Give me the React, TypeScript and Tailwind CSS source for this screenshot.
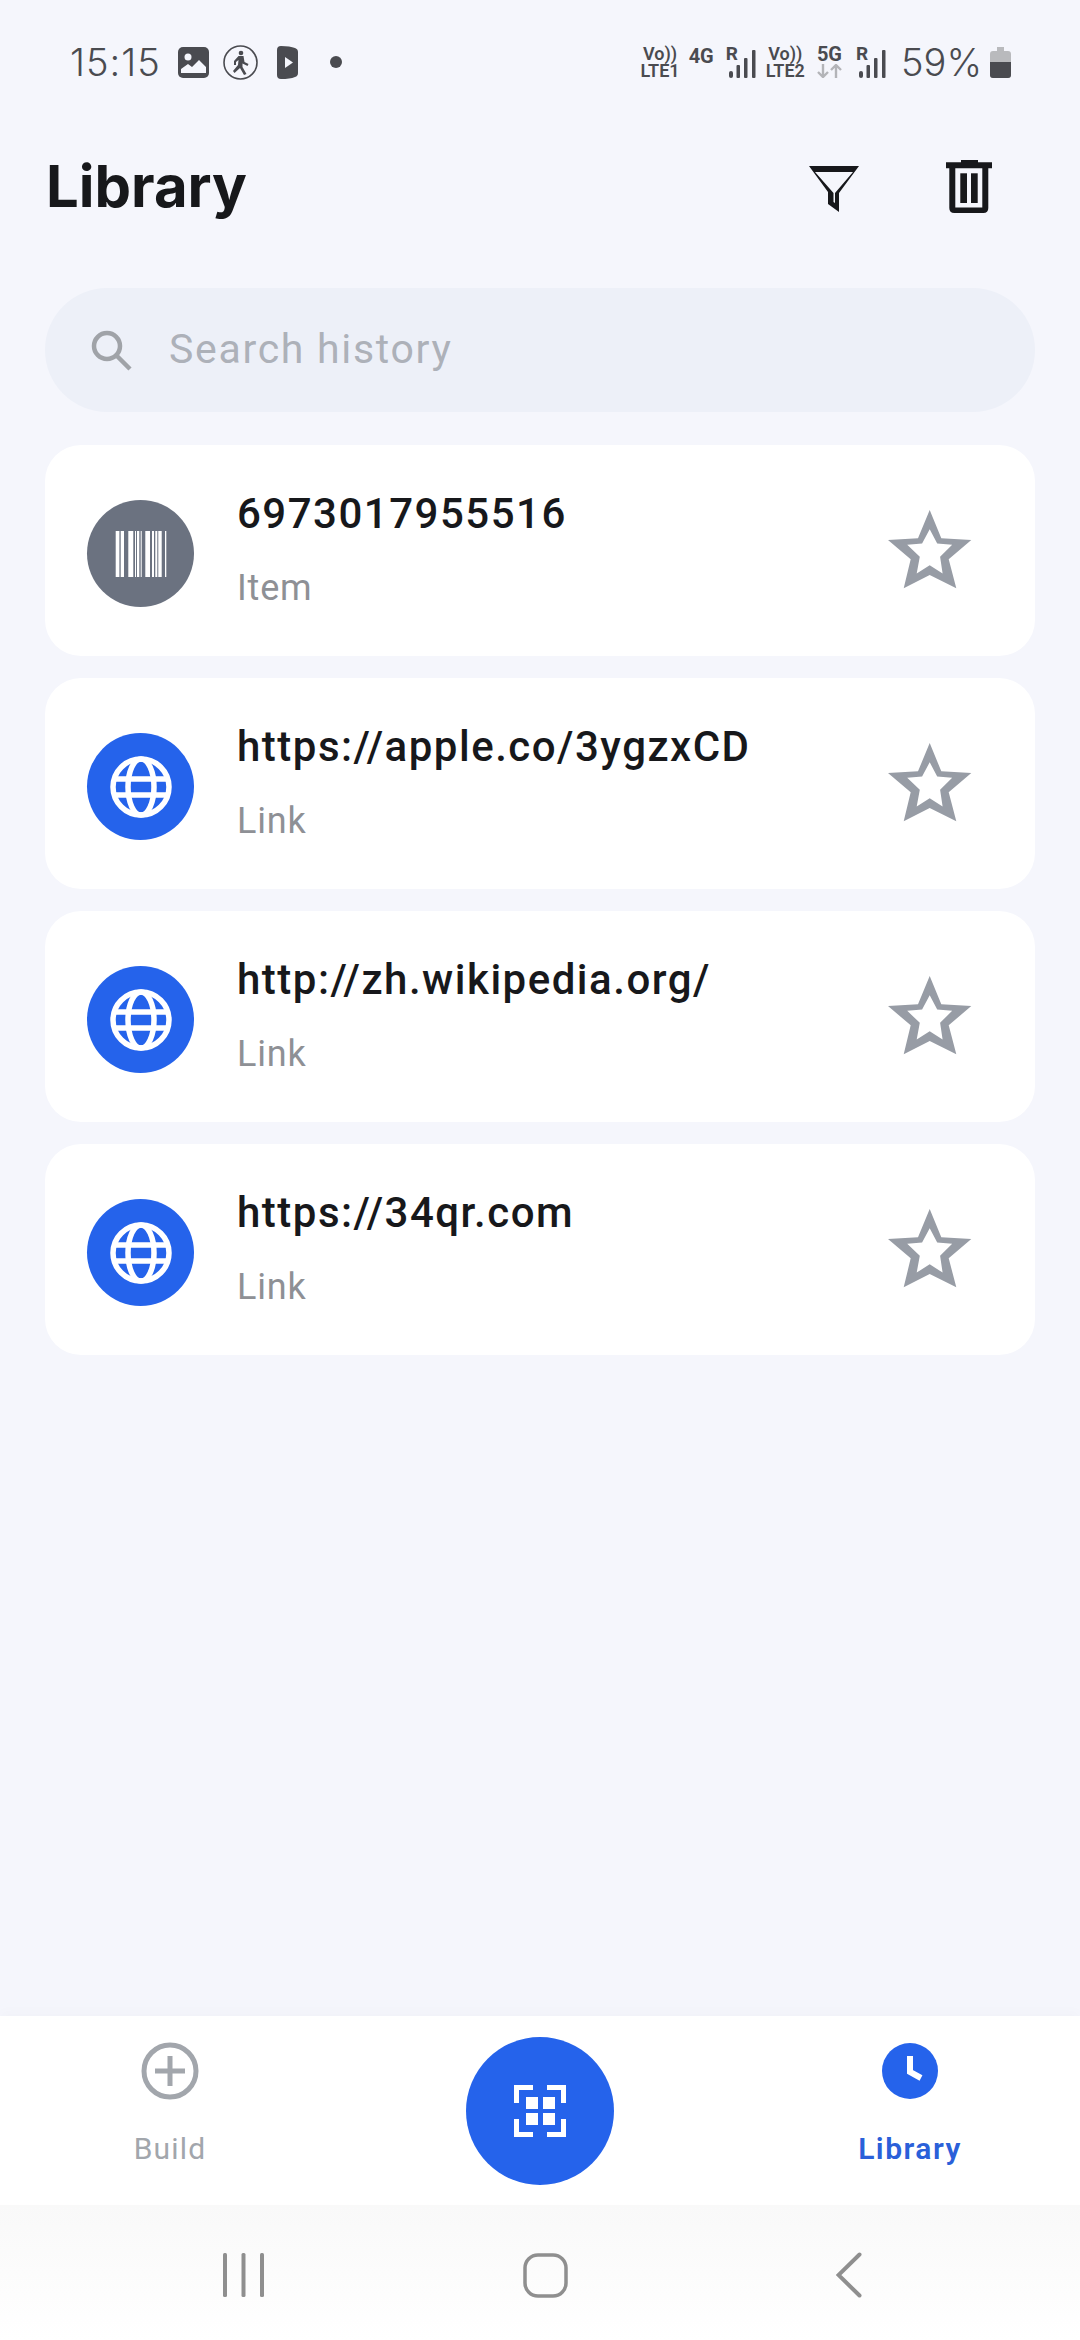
const items = [
  { title: '6973017955516', sub: 'Item', kind: 'barcode' },
  { title: 'https://apple.co/3ygzxCD', sub: 'Link', kind: 'link' },
  { title: 'http://zh.wikipedia.org/', sub: 'Link', kind: 'link' },
  { title: 'https://34qr.com', sub: 'Link', kind: 'link' },
];

function Bars() {
  return (
    <svg width="27" height="28" viewBox="0 0 27 28" fill="#4a4b50">
      <rect x="0" y="21" width="4" height="7" rx="2" />
      <rect x="7.5" y="15" width="3.5" height="13" rx="1" />
      <rect x="15" y="8" width="3.5" height="20" rx="1" />
      <rect x="23" y="0" width="3.5" height="28" rx="1" />
    </svg>
  );
}

function Signal() {
  return (
    <div className="relative h-[31px] w-[30px]">
      <span className="absolute top-[-3px] left-0 text-[19px] leading-none font-bold">R</span>
      <div className="absolute bottom-0 left-[3px]"><Bars /></div>
    </div>
  );
}

function Volte({ label }: { label: string }) {
  return (
    <div className="flex flex-col items-center text-[18px] leading-[17px] font-semibold text-[#4a4b50]">
      <span>Vo))</span>
      <span>{label}</span>
    </div>
  );
}

function StatusBar() {
  return (
    <div className="flex h-[122px] shrink-0 items-center justify-between pl-[70px] pr-[69px] pt-[2px] text-[#4a4b50]">
      <div className="flex items-center">
        <span className="w-[89px] font-['Inter',sans-serif] text-[38px] leading-none font-light tracking-[1px] whitespace-nowrap">15:15</span>
        <svg className="ml-[19px]" width="31" height="31" viewBox="0 0 31 31">
          <rect width="31" height="31" rx="5" fill="#4a4b50" />
          <circle cx="10" cy="10" r="3.5" fill="#f5f6fc" />
          <path d="M3 26 L3 22 L10 17 L14 20 L21 13 L28 20 L28 26 Z" fill="#f5f6fc" />
        </svg>
        <svg className="ml-[14px]" width="35" height="35" viewBox="0 0 35 35" fill="#4a4b50">
          <circle cx="17.5" cy="17.5" r="16.5" fill="none" stroke="#4a4b50" strokeWidth="1.6" />
          <circle cx="18" cy="8" r="2.3" />
          <path d="M15.5 11 L20.5 11 L21.5 17 L25.5 19 L24.5 21 L19.5 18.5 L19.5 22 L23.5 29 L21 30 L17 23 L11.5 28 L10 26 L15 20 L15.5 15 L13 17 L13 20 L11 20 L11 16 Z" />
        </svg>
        <svg className="ml-[19px]" width="21" height="33" viewBox="0 0 21 33">
          <path d="M0 4 Q0 0 4 0 Q13 0 18 2 Q21 3 21 6 L21 27 Q21 30 18 31 Q13 33 4 33 Q0 33 0 29 Z" fill="#4a4b50" />
          <path d="M8 11 L16 16.5 L8 22 Z" fill="#f5f6fc" />
        </svg>
        <span className="ml-[32px] h-[12px] w-[12px] rounded-full bg-[#4a4b50]" />
      </div>
      <div className="flex items-center">
        <Volte label="LTE1" />
        <span className="ml-[9px] mb-[13px] text-[20px] leading-none font-bold">4G</span>
        <div className="ml-[12px]"><Signal /></div>
        <div className="ml-[10px]"><Volte label="LTE2" /></div>
        <div className="ml-[12px] flex flex-col items-center">
          <span className="text-[20px] leading-[17px] font-bold">5G</span>
          <svg className="mt-[1px]" width="25" height="14" viewBox="0 0 25 14" fill="none" stroke="#b3b4b8" strokeWidth="2.4">
            <path d="M6 0 V13 M1 8 L6 13 L11 8 M19 14 V1 M14 6 L19 1 L24 6" />
          </svg>
        </div>
        <div className="ml-[14px]"><Signal /></div>
        <span className="ml-[15px] font-['Inter',sans-serif] text-[38px] leading-none font-light">59%</span>
        <svg className="ml-[8px]" width="21" height="31" viewBox="0 0 21 31">
          <path d="M7 0 H14 V4 H18 Q21 4 21 7 V28 Q21 31 18 31 H3 Q0 31 0 28 V7 Q0 4 3 4 H7 Z" fill="#b9babd" />
          <path d="M0 15 H21 V28 Q21 31 18 31 H3 Q0 31 0 28 Z" fill="#4a4b50" />
        </svg>
      </div>
    </div>
  );
}

function Star() {
  return (
    <svg className="mt-[-3px]" width="84" height="79" viewBox="0 0 84 79">
      <path
        fill="#979ca5"
        fillRule="evenodd"
        d="M41.7 0 L53.3 28.3 L83.3 30 L60.7 49.3 L68.3 78.3 L41.7 65 L15.7 78.3 L22.7 49.3 L0 30 L30 28.3 Z M41.7 19.2 L34.1 33.6 L19.2 34.8 L31.8 46.8 L28.7 63.6 L41.7 55.2 L54.6 63.6 L52.1 46.8 L64.2 34.8 L49.2 33.6 Z"
      />
    </svg>
  );
}

function Barcode() {
  const bars = [[0.7, 3.7], [5.7, 3.3], [13.3, 5], [20, 1], [22, 2.3], [25.7, 1], [30.3, 4.7], [37, 2], [40.3, 2], [43.3, 3.4], [50, 1.3]];
  return (
    <svg width="52" height="46" viewBox="0 0 52 46" fill="#fff">
      {bars.map(([x, w]) => (
        <rect key={x} x={x} y="0" width={w} height="46" />
      ))}
    </svg>
  );
}

function Globe() {
  return (
    <svg width="66" height="66" viewBox="0 0 66 66" fill="none" stroke="#fff" strokeWidth="5.5">
      <circle cx="33" cy="33" r="28" />
      <ellipse cx="33" cy="33" rx="13" ry="28" />
      <path d="M6 25 H60 M6 41 H60" />
    </svg>
  );
}

function HistoryCard({ title, sub, kind }: { title: string; sub: string; kind: string }) {
  return (
    <div className="flex h-[211px] items-center rounded-[36px] bg-white pl-[42px] pr-[63px]">
      <div className={`mt-[6px] flex h-[107px] w-[107px] shrink-0 items-center justify-center rounded-full ${kind === 'link' ? 'bg-[#2563eb]' : 'bg-[#6b7280]'}`}>
        {kind === 'link' ? <Globe /> : <Barcode />}
      </div>
      <div className="ml-[43px] flex-1">
        <p className="mt-[-3px] text-[42px] leading-[50px] font-medium tracking-[1.5px] text-[#17181b]">{title}</p>
        <p className="mt-[27px] text-[36px] leading-[44px] tracking-[0.8px] text-[#8e9095]">{sub}</p>
      </div>
      <Star />
    </div>
  );
}

export default function App() {
  return (
    <div className="flex h-[2340px] w-[1080px] flex-col overflow-hidden bg-[#f5f6fc] font-['Roboto',sans-serif]">
      <StatusBar />

      <div className="flex h-[128px] shrink-0 items-center justify-between pl-[46px] pr-[88px]">
        <h1 className="font-['Inter',sans-serif] text-[58px] leading-none font-bold text-[#17181b]">Library</h1>
        <div className="flex items-center">
          <svg className="mt-[5px]" width="50" height="46" viewBox="0 0 50 46">
            <path
              fill="#17181b"
              fillRule="evenodd"
              d="M0 0 H50 L30 27 V46 L19 38 V26 Z M6 6 L24.5 27 V36 L26 37 V27 L44 6 Z"
            />
          </svg>
          <svg className="ml-[87px]" width="46" height="53" viewBox="0 0 46 53" fill="#17181b">
            <path
              fillRule="evenodd"
              d="M15 0 H32 V2.3 H46 V8.3 H42.3 V48 Q42.3 53 37.3 53 H8.3 Q3.3 53 3.3 48 V8.3 H0 V2.3 H15 Z M9.3 8.3 V47.5 H36.3 V8.3 Z"
            />
            <rect x="14.3" y="13.3" width="6.7" height="29.7" />
            <rect x="25" y="13.3" width="6.7" height="29.7" />
          </svg>
        </div>
      </div>

      <div className="mx-[45px] mt-[38px] flex h-[124px] shrink-0 items-center rounded-full bg-[#edf0f8] pl-[46px]">
        <svg width="41" height="41" viewBox="0 0 41 41" fill="none" stroke="#a0a3a8" strokeWidth="4.5">
          <circle cx="16" cy="16" r="13" />
          <path d="M25 25 L39 39" />
        </svg>
        <span className="ml-[37px] text-[41px] tracking-[1.7px] text-[#adb1b9]">Search history</span>
      </div>

      <div className="mx-[45px] mt-[33px] flex flex-col gap-[22px]">
        {items.map((item) => (
          <HistoryCard key={item.title} {...item} />
        ))}
      </div>

      <div className="mt-auto flex h-[189px] shrink-0 items-start bg-white shadow-[0_-4px_12px_rgba(0,0,0,0.02)]">
        <div className="flex w-[340px] flex-col items-center pt-[26px]">
          <svg width="58" height="58" viewBox="0 0 58 58" fill="none" stroke="#a2a6ac" strokeWidth="5">
            <circle cx="29" cy="29" r="26" />
            <path d="M29 14 V44 M14 29 H44" />
          </svg>
          <span className="mt-[30px] text-[30px] leading-[38px] tracking-[1.2px] text-[#a2a6ac]">Build</span>
        </div>
        <div className="flex flex-1 justify-center pt-[21px]">
          <div className="flex h-[148px] w-[148px] items-center justify-center rounded-full bg-[#2563eb]">
            <svg width="52" height="52" viewBox="0 0 52 52" fill="none" stroke="#fff" strokeWidth="5">
              <path d="M2.5 18 V2.5 H19 M33 2.5 H49.5 V18 M2.5 34 V49.5 H19 M33 49.5 H49.5 V34" />
              <g fill="#fff" stroke="none">
                <rect x="12" y="12" width="12" height="12" />
                <rect x="29" y="12" width="12" height="12" />
                <rect x="12" y="28" width="12" height="12" />
                <rect x="29" y="28" width="12" height="12" />
              </g>
            </svg>
          </div>
        </div>
        <div className="flex w-[340px] flex-col items-center pt-[26px]">
          <svg width="58" height="58" viewBox="0 0 58 58">
            <circle cx="29" cy="29" r="28" fill="#2563eb" />
            <path d="M29 14 V30 L40 36" fill="none" stroke="#fff" strokeWidth="6" />
          </svg>
          <span className="mt-[30px] text-[30px] leading-[38px] font-semibold tracking-[1.5px] text-[#2a60d9]">Library</span>
        </div>
      </div>

      <div className="flex h-[135px] shrink-0 items-start bg-gradient-to-b from-[#f9f9f9] to-white pt-[47px]">
        <div className="flex w-full items-center">
          <svg className="ml-[223px]" width="41" height="44" viewBox="0 0 41 44" fill="#8f8f8f">
            <rect x="0" y="0" width="4" height="44" rx="1.5" />
            <rect x="18.5" y="0" width="4" height="44" rx="1.5" />
            <rect x="37" y="0" width="4" height="44" rx="1.5" />
          </svg>
          <svg className="ml-[259px]" width="45" height="45" viewBox="0 0 45 45" fill="none" stroke="#8f8f8f" strokeWidth="3.5">
            <rect x="2" y="2" width="41" height="41" rx="13" />
          </svg>
          <svg className="ml-[268px]" width="26" height="46" viewBox="0 0 26 46" fill="none" stroke="#8f8f8f" strokeWidth="4" strokeLinecap="round">
            <path d="M23.5 2.5 L2.5 23 L23.5 43.5" />
          </svg>
        </div>
      </div>
    </div>
  );
}
